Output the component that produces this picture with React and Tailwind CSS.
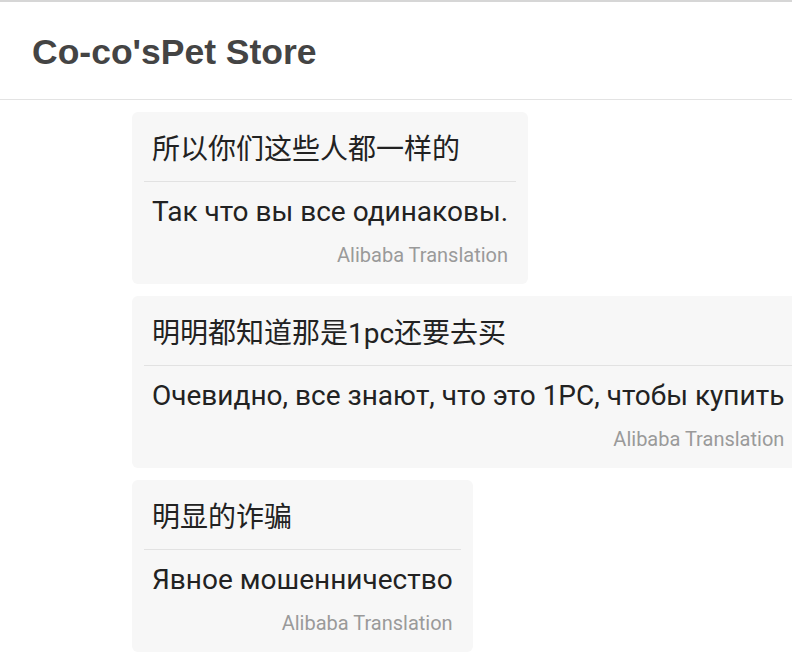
const messages = [
  {
    original: '所以你们这些人都一样的',
    translated: 'Так что вы все одинаковы.',
  },
  {
    original: '明明都知道那是1pc还要去买',
    translated: 'Очевидно, все знают, что это 1PC, чтобы купить',
  },
  {
    original: '明显的诈骗',
    translated: 'Явное мошенничество',
  },
];

function TranslatedBubble({ original, translated }) {
  return (
    <div className="w-max whitespace-nowrap rounded-md bg-[#f7f7f7] px-3">
      <p className="px-2 pt-[18px] pb-[11px] text-[28px] leading-[40px] text-[#222]">{original}</p>
      <div className="h-px bg-[#e2e2e2]" />
      <p className="px-2 pt-[10px] text-[28px] leading-[40px] text-[#222]">{translated}</p>
      <p className="px-2 pt-[10px] pb-[16px] text-right text-[20px] leading-[26px] text-[#9a9a9a]">
        Alibaba Translation
      </p>
    </div>
  );
}

export default function App() {
  return (
    <div
      className="min-h-[656px] w-full overflow-hidden border-t-2 border-[#d6d6d6] bg-white"
      style={{ fontFamily: 'Roboto, "Noto Sans CJK SC", sans-serif' }}
    >
      <header className="flex h-[98px] items-center border-b border-[#e3e3e3] px-8 pt-[5px]">
        <h1
          className="text-[35.5px] font-bold text-[#444]"
          style={{ fontFamily: '"Liberation Sans", Arial, sans-serif' }}
        >
          Co-co'sPet Store
        </h1>
      </header>
      <main className="flex flex-col items-start gap-3 pt-[12px] pl-[132px]">
        {messages.map((m) => (
          <TranslatedBubble key={m.original} {...m} />
        ))}
      </main>
    </div>
  );
}
